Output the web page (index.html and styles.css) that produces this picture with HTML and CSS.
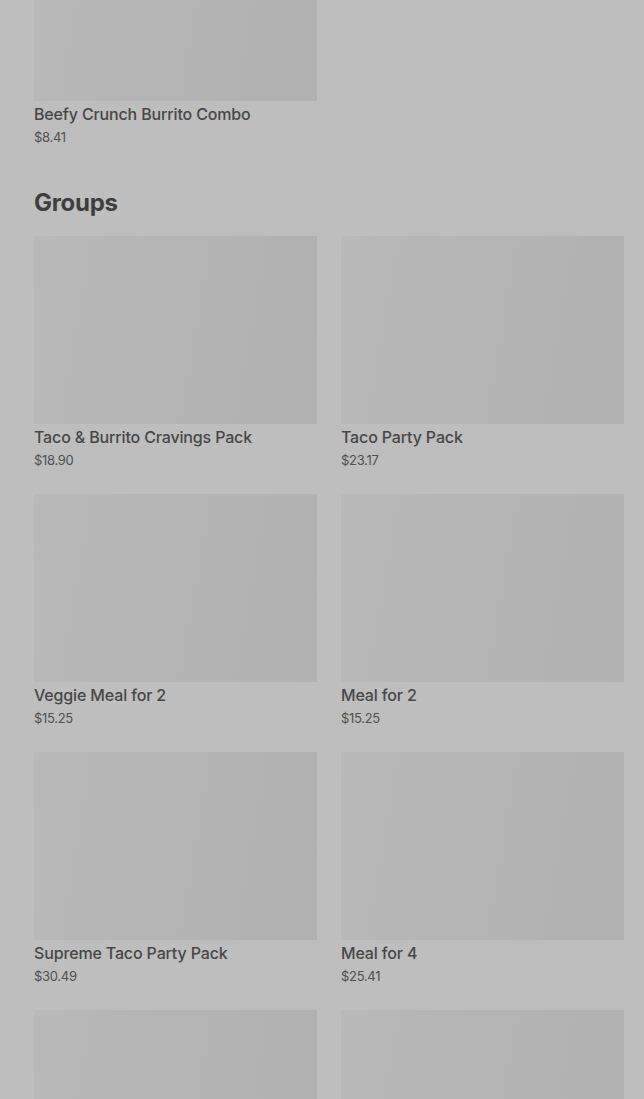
FILE: index.html
```html
<!DOCTYPE html>
<html lang="en">
<head>
    <meta charset="UTF-8">
    <meta name="viewport" content="width=device-width, initial-scale=1.0">
    <title>Menu</title>
    <link rel="stylesheet" href="styles.css">
</head>
<body>

<div class="menu">
    <!-- tail of the previous section -->
    <section class="section section-top">
        <div class="grid">
            <div class="card">
                <div class="thumb"></div>
                <div class="card-name">Beefy Crunch Burrito Combo</div>
                <div class="card-price">$8.41</div>
            </div>
        </div>
    </section>

    <section class="section">
        <h2 class="section-title">Groups</h2>
        <div class="grid">
            <div class="card">
                <div class="thumb"></div>
                <div class="card-name">Taco &amp; Burrito Cravings Pack</div>
                <div class="card-price">$18.90</div>
            </div>
            <div class="card">
                <div class="thumb"></div>
                <div class="card-name">Taco Party Pack</div>
                <div class="card-price">$23.17</div>
            </div>
            <div class="card">
                <div class="thumb"></div>
                <div class="card-name">Veggie Meal for 2</div>
                <div class="card-price">$15.25</div>
            </div>
            <div class="card">
                <div class="thumb"></div>
                <div class="card-name">Meal for 2</div>
                <div class="card-price">$15.25</div>
            </div>
            <div class="card">
                <div class="thumb"></div>
                <div class="card-name">Supreme Taco Party Pack</div>
                <div class="card-price">$30.49</div>
            </div>
            <div class="card">
                <div class="thumb"></div>
                <div class="card-name">Meal for 4</div>
                <div class="card-price">$25.41</div>
            </div>
            <div class="card">
                <div class="thumb"></div>
            </div>
            <div class="card">
                <div class="thumb"></div>
            </div>
        </div>
    </section>
</div>

</body>
</html>
```

FILE: styles.css
```css
* {
    box-sizing: border-box;
}

body {
    margin: 0;
    padding: 0;
    background-color: #bebebe;
    font-family: Inter, "Liberation Sans", Arial, sans-serif;
    color: #444444;
    height: 100vh;
    overflow: hidden;
}

.menu {
    padding: 0 20px 0 34px;
}

/* first section is scrolled partly out of view */
.section-top {
    margin-top: -87px;
}

.section-title {
    font-size: 24px;
    line-height: 32px;
    font-weight: 700;
    color: #3e3e3e;
    margin: 40px 0 17px;
    letter-spacing: -0.3px;
}

.grid {
    display: grid;
    grid-template-columns: 283px 283px;
    column-gap: 24px;
    row-gap: 24px;
}

.thumb {
    height: 188px;
    background: linear-gradient(100deg, #b9b9b9 0%, #b4b4b4 40%, #b1b1b1 100%);
}

.card-name {
    margin-top: 3px;
    font-size: 16px;
    line-height: 20px;
    font-weight: 500;
    color: #474747;
    letter-spacing: -0.15px;
}

.card-price {
    margin-top: 3px;
    font-size: 13px;
    line-height: 20px;
    color: #505050;
    letter-spacing: -0.3px;
}
```
